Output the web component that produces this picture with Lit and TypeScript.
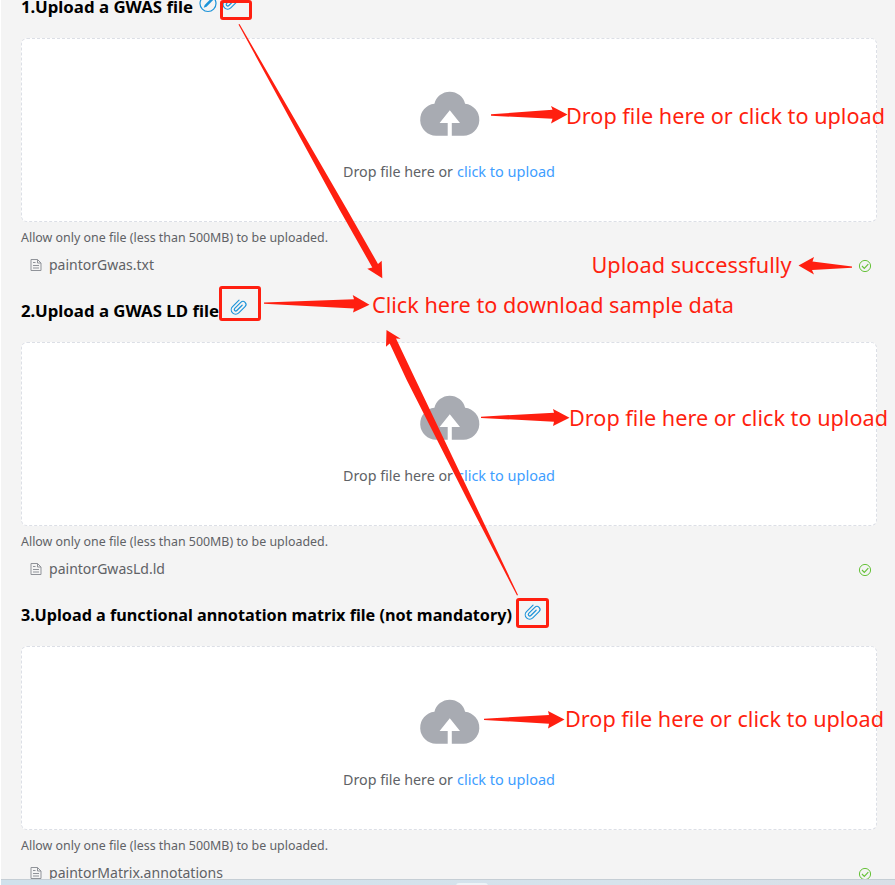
import { LitElement, html, css, svg } from "lit";
import { customElement, property } from "lit/decorators.js";

const clip = html`<svg class="clip" viewBox="0 0 18 18" width="18" height="18">
  <path transform="translate(9.200 9.200) rotate(45)" d="M-4.400-5.600V3.600a4.400 4.400 0 0 0 8.800 0V-5.300a3 3 0 0 0-6 0V3.300a1.500 1.500 0 0 0 3 0V-4.200" />
</svg>`;

@customElement("upload-section")
class UploadSection extends LitElement {
  @property() heading = "";
  @property() file = "";
  @property({ type: Boolean }) edit = false;
  @property({ type: Boolean }) tight = false;
  @property({ type: Boolean }) raised = false;

  static styles = css`
    :host { display: block; height: 304px; color: #606266; }
    svg { display: block; flex: none; overflow: visible; }
    .heading { display: flex; align-items: center; height: 28px; margin-bottom: 17px; color: #000; font-weight: 700; font-size: 16px; white-space: nowrap; }
    .title text { font-size: 16px; fill: #000; }
    .clip { fill: none; stroke: #1b93d9; stroke-width: 1.15; stroke-linecap: round; margin-left: 8px; margin-top: -8px; }
    .raised .clip { margin-left: 9px; margin-top: -7px; }
    .first .clip { margin-left: 4px; margin-top: -10px; }
    .pen { margin-left: 3px; margin-top: -7px; }
    .drop { box-sizing: border-box; height: 184px; border: 1px dashed #dcdfe6; border-radius: 6px; background: #fff; display: flex; flex-direction: column; align-items: center; padding-top: 52px; }
    .cloud { margin-left: 1px; }
    .label { margin-top: 24px; }
    .tip { display: flex; align-items: center; height: 30px; }
    .row { display: flex; align-items: center; height: 26px; padding: 0 5px 0 9px; }
    .name { margin-left: 7px; margin-right: auto; }
    text { fill: #606266; }
    .link { fill: #409eff; }
  `;

  render() {
    const titleWidth = this.edit ? 172 : this.tight ? 198 : 491;
    const nameWidth = this.edit ? 105 : this.tight ? 116 : 174;
    return html`
      <div class="heading ${this.edit ? "first" : ""} ${this.raised ? "raised" : ""}">
        <svg class="title" width=${titleWidth + 2} height="28">
          <text x="0" y="20" textLength=${titleWidth} lengthAdjust="spacingAndGlyphs">${this.heading}</text>
        </svg>
        ${this.edit
          ? html`<svg class="pen" width="19" height="19" viewBox="0 0 19 19">
              <circle cx="10" cy="9.500" r="8" fill="none" stroke="#1b93d9" stroke-width="1.200" />
              <path d="m5.700 13.800 1-2.900 7-7 1.800 1.800-7 7z" fill="#1b93d9" />
            </svg>`
          : ""}
        ${clip}
      </div>
      <div class="drop">
        <svg class="cloud" width="60" height="46" viewBox="0 0 60 46">
          <path fill="#a8abb2" d="M16 44.700A16 16 0 0 1 14.400 12.800a15.800 15.800 0 0 1 30.700 0A16 16 0 0 1 43.500 44.700H31.800V32H40L29.800 19.200 19.600 32h8.100V44.700z" />
        </svg>
        <svg class="label" width="214" height="24">
          <text x="1" y="16" font-size="14.500" textLength="110" lengthAdjust="spacingAndGlyphs">Drop file here or</text>
          <text class="link" x="115" y="16" font-size="14.500" textLength="98" lengthAdjust="spacingAndGlyphs">click to upload</text>
        </svg>
      </div>
      <div class="tip">
        <svg width="310" height="20">
          <text x="0" y="15" font-size="12" textLength="307" lengthAdjust="spacingAndGlyphs">Allow only one file (less than 500MB) to be uploaded.</text>
        </svg>
      </div>
      <div class="row">
        <svg width="12" height="14" viewBox="0 0 12 14" fill="none" stroke="#909399">
          <path d="M1 1.500h6.500l3.500 3.500v7.500H1zM7.500 1.500V5H11M3 4.500h2.500M3 7.500h6M3 10h6" />
        </svg>
        <svg class="name" width=${nameWidth + 4} height="24">
          <text x="0" y="17" font-size="14.500" textLength=${nameWidth} lengthAdjust="spacingAndGlyphs">${this.file}</text>
        </svg>
        <svg width="14" height="14" viewBox="0 0 14 14" fill="none" stroke="#67c23a">
          <circle cx="7" cy="8" r="5.600" /><path d="m4 8 2.300 2.300 4-4.200" stroke-width="1.200" />
        </svg>
      </div>
    `;
  }
}

const arrows = [
  "239.500,24 347.300,210 378,264 381.700,260.700 382.300,278.300 367.300,268.700 372.300,267.500 339.700,210 238.500,24.500",
  "264,302.500 354,299.300 352.700,295 369.500,304.700 353,312.500 354,308.500 264,303.800",
  "491,114.300 552.500,109.700 551,106 567.500,114.500 551,123.500 552.500,118.700 491,115.700",
  "481,416.700 554,412.700 553,409 569.500,417.700 553,426 554,421.700 481,418",
  "484,718.700 549,715 548,711 564.500,719.500 548,728.500 549,723.700 484,720",
  "852,266.500 812.500,261.500 814,257 798.500,265.500 814,274.500 812,270 852,267.800",
  "518,595 473,500 415.700,380 396,338.500 400.700,338.700 386.500,330 386,346.700 389.700,343.500 406.700,380 467.500,500 517,595.500",
];

const notes: [number, number, number, string][] = [
  [566, 124, 319, "Drop file here or click to upload"],
  [591.5, 273, 200, "Upload successfully"],
  [372, 313, 362, "Click here to download sample data"],
  [569, 426, 319, "Drop file here or click to upload"],
  [565, 727, 319, "Drop file here or click to upload"],
];

const frames = [[221.5, 1.5, 29, 17], [220.5, 287.5, 39, 32], [517.5, 599.5, 30, 27]];

@customElement("app-root")
class AppRoot extends LitElement {
  static styles = css`
    :host { display: block; position: relative; height: 885px; overflow: hidden; box-sizing: border-box; border-left: 1px solid #fff; background: #f4f4f4; font-family: "Noto Sans", "Open Sans", sans-serif; }
    .page { box-sizing: border-box; padding: 0 18px 0 20px; margin-top: -7px; height: 886px; overflow: hidden; }
    .overlay { position: absolute; top: 0; left: -1px; }
    .overlay text { font-size: 21.5px; fill: #ff1f10; }
    .overlay polygon { fill: #ff1f10; }
    .overlay rect { fill: none; stroke: #ff1f10; stroke-width: 3; }
    .taskbar { display: flex; justify-content: center; box-sizing: border-box; height: 6px; margin-left: -1px; padding-left: 48px; border-top: 1px solid #c5ced5; background: linear-gradient(90deg, #d0e1ec, #d6e3ec 70%, #d9dfe7); }
    .tab { width: 32px; height: 3px; margin-top: 3px; border-radius: 3px 3px 0 0; background: #edf3f7; }
  `;

  render() {
    return html`
      <div class="page">
        <upload-section heading="1.Upload a GWAS file" file="paintorGwas.txt" edit></upload-section>
        <upload-section heading="2.Upload a GWAS LD file" file="paintorGwasLd.ld" tight></upload-section>
        <upload-section heading="3.Upload a functional annotation matrix file (not mandatory)" file="paintorMatrix.annotations" raised></upload-section>
      </div>
      <div class="taskbar"><div class="tab"></div></div>
      <svg class="overlay" width="895" height="885">
        ${frames.map(([x, y, w, h]) => svg`<rect x=${x} y=${y} width=${w} height=${h} rx="1.500" />`)}
        ${arrows.map((p) => svg`<polygon points=${p} />`)}
        ${notes.map(([x, y, w, t]) => svg`<text x=${x} y=${y} textLength=${w} lengthAdjust="spacingAndGlyphs">${t}</text>`)}
      </svg>
    `;
  }
}
